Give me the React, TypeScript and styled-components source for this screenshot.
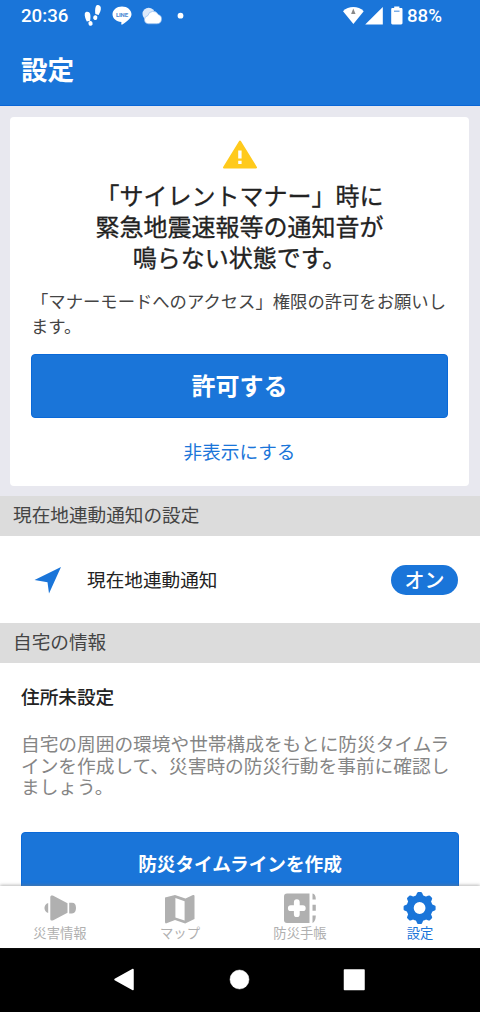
import React from 'react';
import styled, { createGlobalStyle } from 'styled-components';

const BLUE = '#1a75d9';

const GlobalStyle = createGlobalStyle`
  * { box-sizing: border-box; }
  body { margin: 0; background: #fff; }
  button { border: 0; padding: 0; background: none; font: inherit; }
`;

const Screen = styled.div`
  display: flex;
  flex-direction: column;
  width: 480px;
  height: 1012px;
  overflow: hidden;
  background: #fff;
  color: #222;
  font-family: 'Noto Sans CJK JP', sans-serif;
  white-space: nowrap;
`;

const Header = styled.header`
  flex: none;
  height: 106px;
  background: ${BLUE};
  border-bottom: 1px solid #0a66d6;
  color: #fff;
`;

const StatusBar = styled.div`
  display: flex;
  justify-content: space-between;
  height: 32px;
  padding: 0 38px 0 21px;
  font: 500 18.7px/33px Roboto, sans-serif;
`;

const StatusGroup = styled.div`
  display: flex;
  svg { display: block; flex: none; }
`;

const Title = styled.h1`
  margin: 0;
  padding-left: 21px;
  font-size: 26.6px;
  line-height: 73px;
  font-weight: 700;
`;

const Content = styled.main`
  flex: 1;
  min-height: 0;
  overflow: hidden;
`;

const AlertArea = styled.section`
  height: 390px;
  padding: 11px 11px 10px 10px;
  background: #e8e8ef;
`;

const AlertCard = styled.div`
  display: flex;
  flex-direction: column;
  align-items: center;
  height: 369px;
  padding: 23px 21px 0;
  border-radius: 4px;
  background: #fff;
`;

const AlertTitle = styled.h2`
  margin: 10px 0 0;
  font-size: 24px;
  line-height: 31px;
  font-weight: 400;
  text-align: center;
  -webkit-text-stroke: 0.3px #222;
`;

const AlertText = styled.p`
  align-self: stretch;
  margin: 16px 0;
  font-size: 17.33px;
  line-height: 25px;
  color: #444;
`;

const PrimaryButton = styled.button<{ $size: number }>`
  display: block;
  flex: none;
  width: 100%;
  height: 64px;
  padding-bottom: 3px;
  border-radius: 4px;
  border: 1px solid #0a69d8;
  background: ${BLUE};
  color: #fff;
  font-size: ${p => p.$size}px;
  font-weight: 700;
`;

const LinkButton = styled.button`
  margin-top: 19px;
  font-size: 18.65px;
  line-height: 28px;
  color: ${BLUE};
`;

const SectionTitle = styled.h3`
  margin: 0;
  height: 40px;
  padding-left: 13px;
  background: #dcdcdc;
  color: #444;
  font-size: 18.65px;
  line-height: 36px;
  font-weight: 400;
`;

const SettingRow = styled.div`
  display: flex;
  align-items: center;
  height: 87px;
  padding: 0 22px 0 33px;
`;

const SettingLabel = styled.span`
  flex: 1;
  margin-left: 25px;
  padding-bottom: 2px;
  font-size: 18.65px;
  line-height: 28px;
`;

const Pill = styled.span`
  width: 67px;
  height: 30px;
  border-radius: 15px;
  background: ${BLUE};
  color: #fff;
  text-align: center;
  font-size: 20px;
  line-height: 29px;
  font-weight: 500;
`;

const HomeBlock = styled.section`
  padding: 19px 21px 0;
`;

const HomeTitle = styled.h4`
  margin: 0;
  font-size: 18.65px;
  line-height: 28px;
  font-weight: 500;
`;

const HomeText = styled.p`
  margin: 22px 0 35px;
  color: #858585;
  font-size: 18.7px;
  line-height: 21.5px;
`;

const TabBar = styled.nav`
  position: relative;
  flex: none;
  display: grid;
  grid-template-columns: repeat(4, 120px);
  height: 62px;
  background: #fff;
  box-shadow: 0 -1px 3px rgba(120, 120, 120, 0.5);
`;

const Tab = styled.div<{ $active?: boolean }>`
  display: flex;
  flex-direction: column;
  align-items: center;
  padding-top: 5px;
  color: ${p => (p.$active ? BLUE : '#b0b0b0')};
  font-size: 13.33px;
  line-height: 20px;
  svg { display: block; margin-bottom: -2px; }
`;

const SystemBar = styled.footer`
  flex: none;
  height: 64px;
  background: #000;
  svg { display: block; }
`;

const StatusIcons = () => (
  <svg width="125" height="32" viewBox="68 0 125 32" fill="#fff">
    {/* footprints */}
    <path d="M84.800 13.500c.5-2.500 4.700-2.300 5.300.3.600 2.200.4 4.700 0 7l-3.300.8c-1-2.600-2.500-5.200-2-8.100z" />
    <ellipse cx="90.400" cy="23.500" rx="2.100" ry="2.400" transform="rotate(-15 90 23)" />
    <path d="M95.800 6.500c1-2.300 4.600-1.700 5 1 .5 3-1.100 5-2.200 7.400l-3.300-.9c-.2-2.500-.4-5.200.5-7.500z" />
    <ellipse cx="95.400" cy="17.500" rx="2.100" ry="2.400" transform="rotate(15 95 17)" />
    {/* chat bubble */}
    <path d="M122 6.500c5.300 0 9.500 3.500 9.500 7.800 0 4-4.700 7.300-9.200 10.300-.8.500-1.200.1-.9-2.500-5-.3-8.900-3.600-8.900-7.800 0-4.300 4.200-7.800 9.500-7.800z" />
    <text x="122" y="16.800" textAnchor="middle" fill="#4d87d2" fontSize="6" fontWeight="700" fontFamily="Roboto, sans-serif" textLength="12">LINE</text>
    {/* sun behind cloud */}
    <circle cx="148.700" cy="14" r="6.200" fill="#dce9fa" />
    <path d="M148 23.800a4.100 4.100 0 0 1-.2-8.100 5.500 5.500 0 0 1 10.300-1.300 4.800 4.800 0 0 1-1.300 9.400z" stroke="#8db9ee" strokeWidth="0.700" />
    <circle cx="180.500" cy="15.700" r="2.900" />
  </svg>
);

const SignalIcons = () => (
  <svg width="67" height="32" viewBox="340 0 67 32" fill="#fff">
    <path d="M343 11.200c5.500-5.600 15.200-5.600 20.700 0L353.400 24z" />
    <path d="M353.300 8.500l2.200 5.500h-4.400z" fill="#888" />
    <path d="M382.800 7v17.500h-17.600z" />
    <path d="M394.200 6.500h5.200v1.500h1.700c.9 0 1.400.5 1.400 1.400v13.700c0 .9-.5 1.400-1.400 1.400h-8.500c-.9 0-1.400-.5-1.400-1.400V9.400c0-.9.5-1.400 1.400-1.400h1.600z" />
    <path d="M394 11.200h5.500" stroke="#5b9ae3" strokeWidth="1.200" />
  </svg>
);

const WarningIcon = () => (
  <svg width="36" height="29" viewBox="0 0 36 29">
    <path d="M18 1.500L34 27.500H2z" fill="#ffca1c" stroke="#ffca1c" strokeWidth="2" strokeLinejoin="round" />
    <path d="M16.200 10.500h3.400v8h-3.400zM16.200 20.800h3.400v3.200h-3.400z" fill="#fff" />
  </svg>
);

const ArrowIcon = () => (
  <svg width="29" height="29" viewBox="0 0 29 29">
    <path d="M28 2L16 28.500 14.500 17.200 1.500 15z" fill={BLUE} />
  </svg>
);

const TabIcon = ({ children }: { children: React.ReactNode }) => (
  <svg width="34" height="34" viewBox="0 0 34 34" fill="currentColor">{children}</svg>
);

const AlarmIcon = () => (
  <TabIcon>
    <path d="M7.300 6c0-1.700 1.600-2 3-1.200l14.200 7.400v9.600L10.300 29.200c-1.400.8-3 .5-3-1.200z" />
    <path d="M26.200 11.800h2.800q4 0 4 5.200t-4 5.500h-2.800z" />
    <path d="M5.200 12v10C.2 20.500.2 13.500 5.200 12z" />
  </TabIcon>
);

const MapIcon = () => (
  <TabIcon>
    <path fillRule="evenodd" d="M2 6.500L12 4l10.500 3.600L30 4q1.500-.4 1.500 1v23L22.200 32.500 12 29l-8.500 3.300q-1.500.4-1.500-1.300zM12.400 7v19.500l9.200 3V10.200z" />
  </TabIcon>
);

const NotebookIcon = () => (
  <TabIcon>
    <path d="M4 2.500h22.500v29.500H4q-3 0-3-3v-23.500q0-3 3-3z" />
    <path d="M13.800 11.200v12M7.800 17.200h12" stroke="#fff" strokeWidth="5.800" strokeLinecap="round" />
    <path d="M29.500 2.500q3.300.3 3.300 6h-3.300zM29.500 13.800h3.300v6h-3.300zM29.500 24.500h3.300q0 6-3.300 7.500z" />
  </TabIcon>
);

const GearIcon = () => (
  <TabIcon>
    <circle cx="16.600" cy="17" r="9.500" fill="none" stroke="currentColor" strokeWidth="7.200" />
    {[0, 45, 90, 135, 180, 225, 270, 315].map(angle => (
      <path key={angle} d="M12.400 6l1.400-3.500q.5-1.500 1.400-1.500h2.800q.9 0 1.400 1.500l1.400 3.500z" transform={`rotate(${angle} 16.600 17)`} />
    ))}
  </TabIcon>
);

export default function App() {
  return (
    <Screen>
      <GlobalStyle />
      <Header>
        <StatusBar>
          <StatusGroup><span>20:36</span><StatusIcons /></StatusGroup>
          <StatusGroup><SignalIcons /><span>88%</span></StatusGroup>
        </StatusBar>
        <Title>設定</Title>
      </Header>
      <Content>
        <AlertArea>
          <AlertCard>
            <WarningIcon />
            <AlertTitle>「サイレントマナー」時に<br />緊急地震速報等の通知音が<br />鳴らない状態です。</AlertTitle>
            <AlertText>「マナーモードへのアクセス」権限の許可をお願いし<br />ます。</AlertText>
            <PrimaryButton $size={24}>許可する</PrimaryButton>
            <LinkButton>非表示にする</LinkButton>
          </AlertCard>
        </AlertArea>
        <SectionTitle>現在地連動通知の設定</SectionTitle>
        <SettingRow>
          <ArrowIcon />
          <SettingLabel>現在地連動通知</SettingLabel>
          <Pill>オン</Pill>
        </SettingRow>
        <SectionTitle>自宅の情報</SectionTitle>
        <HomeBlock>
          <HomeTitle>住所未設定</HomeTitle>
          <HomeText>自宅の周囲の環境や世帯構成をもとに防災タイムラ<br />インを作成して、災害時の防災行動を事前に確認し<br />ましょう。</HomeText>
          <PrimaryButton $size={18.65}>防災タイムラインを作成</PrimaryButton>
        </HomeBlock>
      </Content>
      <TabBar>
        <Tab><AlarmIcon />災害情報</Tab>
        <Tab><MapIcon />マップ</Tab>
        <Tab><NotebookIcon />防災手帳</Tab>
        <Tab $active><GearIcon />設定</Tab>
      </TabBar>
      <SystemBar>
        <svg width="480" height="64" viewBox="0 0 480 64" fill="#fff" stroke="#fff" strokeLinejoin="round">
          <path d="M115 31.500L133 21.500v20z" strokeWidth="1.500" />
          <circle cx="239.500" cy="31.500" r="9.500" strokeWidth="0.500" />
          <rect x="344.500" y="22" width="19.500" height="19.500" strokeWidth="1.500" />
        </svg>
      </SystemBar>
    </Screen>
  );
}
